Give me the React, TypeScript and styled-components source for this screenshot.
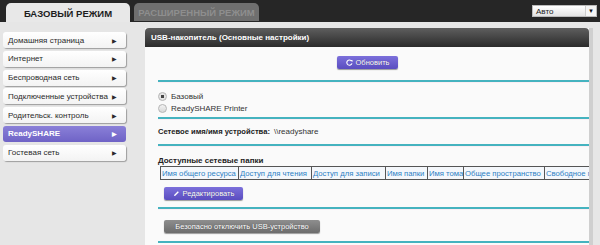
import styled, { createGlobalStyle } from 'styled-components'

const GlobalStyle = createGlobalStyle`
  html, body {
    margin: 0;
    padding: 0;
    background: #e6e6e6;
    font-family: 'Liberation Sans', Arial, sans-serif;
    overflow: hidden;
  }
`

const Page = styled.div`
  width: 600px;
  height: 245px;
  display: flex;
  flex-direction: column;
  background: #e6e6e6;
`

const TopBar = styled.div`
  height: 22px;
  background: #262626;
  display: flex;
  align-items: flex-end;
  padding-left: 6px;
  gap: 4px;
  position: relative;
`

const Tab = styled.div<{ $active?: boolean }>`
  width: ${(p) => (p.$active ? '124px' : '125px')};
  height: ${(p) => (p.$active ? '19px' : '18px')};
  align-self: ${(p) => (p.$active ? 'flex-end' : 'flex-start')};
  margin-top: 3px;
  border-radius: 5px 5px 0 0;
  background: ${(p) => (p.$active ? '#e8e8e8' : '#6f6f6f')};
  color: ${(p) => (p.$active ? '#1d1d1d' : '#8e8e8e')};
  font-size: 9.5px;
  font-weight: bold;
  white-space: nowrap;
  display: flex;
  align-items: center;
  justify-content: center;
  padding-top: 1px;
  box-sizing: border-box;
`

const Select = styled.div`
  position: absolute;
  right: 3px;
  top: 5px;
  width: 65px;
  height: 12px;
  background: linear-gradient(#ffffff, #e2e2e2);
  border: 1px solid #bbb;
  box-sizing: border-box;
  display: flex;
  align-items: center;
  justify-content: space-between;
  font-size: 8px;
  color: #222;
  padding-left: 3px;
`

const SelectArrow = styled.span`
  width: 10px;
  height: 10px;
  font-size: 6px;
  display: flex;
  align-items: center;
  justify-content: center;
  color: #111;
  background: #f4f4f4;
  border-left: 1px solid #ccc;
`

const Main = styled.div`
  flex: 1;
  display: flex;
  padding-top: 6px;
`

const Sidebar = styled.div`
  width: 145px;
  padding: 4px 0 0 3px;
  box-sizing: border-box;
  display: flex;
  flex-direction: column;
  gap: 2.8px;
`

const MenuItem = styled.div<{ $active?: boolean }>`
  width: 123px;
  height: 16px;
  border-radius: 3px;
  box-sizing: border-box;
  padding: 0 9px 0 5px;
  display: flex;
  align-items: center;
  justify-content: space-between;
  font-size: 8px;
  white-space: nowrap;
  font-weight: ${(p) => (p.$active ? 'bold' : 'normal')};
  color: ${(p) => (p.$active ? '#fff' : '#2a2a2a')};
  background: ${(p) =>
    p.$active ? 'linear-gradient(#8a80d8, #6f63c6)' : 'linear-gradient(#ffffff, #f3f3f3)'};
  box-shadow: ${(p) => (p.$active ? 'none' : '1px 1px 1px #9d9d9d')};
`

const Arrow = styled.span`
  font-size: 6px;
`

const Panel = styled.div`
  width: 448px;
  display: flex;
  flex-direction: column;
  background: #fafafa;
  border-right: 4px solid #cfcfcf;
  box-sizing: border-box;
`

const PanelHeader = styled.div`
  height: 19px;
  background: linear-gradient(#5e5e5e, #2b2b2b);
  border-radius: 4px 4px 0 0;
  color: #fff;
  font-size: 8px;
  font-weight: bold;
  display: flex;
  align-items: center;
  padding-left: 6px;
`

const PanelBody = styled.div`
  padding: 9px 0 0 13px;
  display: flex;
  flex-direction: column;
  overflow: hidden;
`

const Centered = styled.div`
  display: flex;
  justify-content: center;
  padding-right: 12px;
`

const Button = styled.div<{ $gray?: boolean; $width: number }>`
  width: ${(p) => p.$width}px;
  height: 13px;
  border-radius: 2px;
  display: flex;
  align-items: center;
  justify-content: center;
  gap: 3px;
  font-size: 7.5px;
  white-space: nowrap;
  color: #fff;
  text-shadow: 0 0 1px rgba(0, 0, 0, 0.4);
  background: ${(p) =>
    p.$gray ? 'linear-gradient(#8e8e8e, #6c6c6c)' : 'linear-gradient(#7c70db, #5a4dc0)'};
  box-shadow: 0 1px 1px #999;
`

const Divider = styled.div<{ $top: number; $bottom: number }>`
  height: 2px;
  background: #45b3bf;
  margin: ${(p) => p.$top}px 0 ${(p) => p.$bottom}px;
  box-shadow: 0 1px 0 #fbeef4;
`

const RadioRow = styled.label`
  display: flex;
  align-items: center;
  gap: 4px;
  height: 12px;
  font-size: 8px;
  color: #333;
`

const Radio = styled.span<{ $checked?: boolean }>`
  width: 7px;
  height: 7px;
  border-radius: 50%;
  border: 1px solid #b5b5b5;
  background: ${(p) =>
    p.$checked ? 'radial-gradient(#444 0 1.5px, #e4e4e4 2px)' : 'linear-gradient(#f3f3f3, #d8d8d8)'};
`

const FieldRow = styled.div`
  display: flex;
  font-size: 8px;
  height: 12px;
  align-items: center;
  white-space: nowrap;
`

const FieldLabel = styled.span`
  font-weight: bold;
  font-size: 7.6px;
  color: #222;
  width: 116px;
`

const FieldValue = styled.span`
  color: #333;
`

const SectionTitle = styled.div`
  font-size: 8px;
  font-weight: bold;
  color: #222;
  height: 11px;
  line-height: 11px;
`

const Table = styled.div`
  display: flex;
  margin-left: 2px;
  border: 1px solid #555;
  border-right: none;
  height: 14px;
  box-sizing: border-box;
  background: #f4f7fb;
  white-space: nowrap;
`

const Cell = styled.div<{ $w: number }>`
  flex: 0 0 ${(p) => p.$w}px;
  border-right: 1px solid #555;
  font-size: 7.7px;
  color: #2c7fc4;
  display: flex;
  align-items: center;
  padding-left: 1px;
  overflow: hidden;
  box-sizing: border-box;
`

const Indent = styled.div<{ $top: number }>`
  padding-left: 6px;
  margin-top: ${(p) => p.$top}px;
`

const PencilIcon = () => (
  <svg width="7" height="7" viewBox="0 0 7 7">
    <path d="M1 6 L1.3 4.7 L4.8 1.2 L5.8 2.2 L2.3 5.7 Z" fill="#fff" />
  </svg>
)

const RefreshIcon = () => (
  <svg width="7" height="7" viewBox="0 0 8 8">
    <path d="M6.4 2.4 A3 3 0 1 0 6.8 5" fill="none" stroke="#fff" strokeWidth="1.3" />
    <path d="M5 1 L7.4 1 L7.4 3.4 Z" fill="#fff" />
  </svg>
)

const menu = [
  'Домашняя страница',
  'Интернет',
  'Беспроводная сеть',
  'Подключенные устройства',
  'Родительск. контроль',
  'ReadySHARE',
  'Гостевая сеть',
]

const columns: [string, number][] = [
  ['Имя общего ресурса', 78],
  ['Доступ для чтения', 73],
  ['Доступ для записи', 74],
  ['Имя папки', 42],
  ['Имя тома', 36],
  ['Общее пространство', 81],
  ['Свободное пространство', 60],
]

export default function App() {
  return (
    <Page>
      <GlobalStyle />
      <TopBar>
        <Tab $active>БАЗОВЫЙ РЕЖИМ</Tab>
        <Tab>РАСШИРЕННЫЙ РЕЖИМ</Tab>
        <Select>
          Авто
          <SelectArrow>▼</SelectArrow>
        </Select>
      </TopBar>
      <Main>
        <Sidebar>
          {menu.map((m) => (
            <MenuItem key={m} $active={m === 'ReadySHARE'}>
              {m}
              <Arrow>▶</Arrow>
            </MenuItem>
          ))}
        </Sidebar>
        <Panel>
          <PanelHeader>USB-накопитель (Основные настройки)</PanelHeader>
          <PanelBody>
            <Centered>
              <Button $width={61}>
                <RefreshIcon />
                Обновить
              </Button>
            </Centered>
            <Divider $top={11} $bottom={8} />
            <RadioRow>
              <Radio $checked />
              Базовый
            </RadioRow>
            <RadioRow>
              <Radio />
              ReadySHARE Printer
            </RadioRow>
            <Divider $top={3} $bottom={6} />
            <FieldRow>
              <FieldLabel>Сетевое имя/имя устройства:</FieldLabel>
              <FieldValue>\\readyshare</FieldValue>
            </FieldRow>
            <Divider $top={7} $bottom={9} />
            <SectionTitle>Доступные сетевые папки</SectionTitle>
            <Table>
              {columns.map(([c, w]) => (
                <Cell key={c} $w={w}>
                  {c}
                </Cell>
              ))}
            </Table>
            <Indent $top={7}>
              <Button $width={79}>
                <PencilIcon />
                Редактировать
              </Button>
            </Indent>
            <Divider $top={7} $bottom={11} />
            <Indent $top={0}>
              <Button $gray $width={156}>
                Безопасно отключить USB-устройство
              </Button>
            </Indent>
            <Divider $top={8} $bottom={0} />
          </PanelBody>
        </Panel>
      </Main>
    </Page>
  )
}
